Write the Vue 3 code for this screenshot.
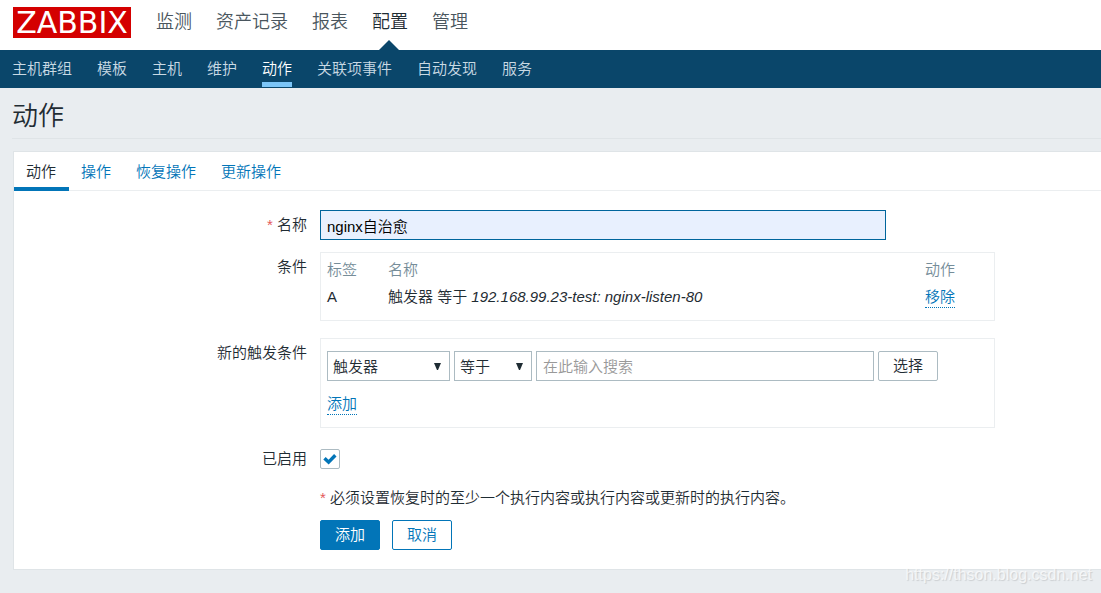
<script setup>
import { ref } from 'vue'

const mainMenu = ['监测', '资产记录', '报表', '配置', '管理']
const subMenu = ['主机群组', '模板', '主机', '维护', '动作', '关联项事件', '自动发现', '服务']
const tabs = ['动作', '操作', '恢复操作', '更新操作']

const name = ref('nginx自治愈')
const conditionType = ref('触发器')
const operator = ref('等于')
const search = ref('')
const enabled = ref(true)
</script>

<template>
  <div class="page">
    <header class="top">
      <a class="logo" href="#">ZABBIX</a>
      <nav class="main-menu">
        <a v-for="item in mainMenu" :key="item" href="#" :class="{ selected: item === '配置' }">{{ item }}</a>
      </nav>
    </header>
    <nav class="sub-menu">
      <a v-for="item in subMenu" :key="item" href="#" :class="{ selected: item === '动作' }">{{ item }}</a>
    </nav>

    <div class="title"><h1>动作</h1></div>

    <main class="panel">
      <nav class="tabs">
        <a v-for="tab in tabs" :key="tab" href="#" :class="{ selected: tab === '动作' }">{{ tab }}</a>
      </nav>

      <form class="form" @submit.prevent>
        <label class="caption" for="name"><span class="star">*</span> 名称</label>
        <input id="name" v-model="name" class="name-input" type="text">

        <div class="caption">条件</div>
        <div class="box conditions">
          <table>
            <thead>
              <tr><th class="col-label">标签</th><th>名称</th><th class="col-action">动作</th></tr>
            </thead>
            <tbody>
              <tr>
                <td>A</td>
                <td>触发器 等于 <em>192.168.99.23-test: nginx-listen-80</em></td>
                <td><button type="button" class="link">移除</button></td>
              </tr>
            </tbody>
          </table>
        </div>

        <div class="caption">新的触发条件</div>
        <div class="box new-condition">
          <div class="controls">
            <div class="select type">
              <select v-model="conditionType" aria-label="新的触发条件"><option>触发器</option></select>
              <svg width="7" height="7" viewBox="0 0 7 7"><path d="M0 0h7L4 7H3z" fill="#1f2c33" /></svg>
            </div>
            <div class="select operator">
              <select v-model="operator" aria-label="运算符"><option>等于</option></select>
              <svg width="7" height="7" viewBox="0 0 7 7"><path d="M0 0h7L4 7H3z" fill="#1f2c33" /></svg>
            </div>
            <input v-model="search" class="search" type="text" placeholder="在此输入搜索" aria-label="在此输入搜索">
            <button type="button" class="btn grey">选择</button>
          </div>
          <button type="button" class="link">添加</button>
        </div>

        <label class="caption" for="enabled">已启用</label>
        <div class="check">
          <input id="enabled" v-model="enabled" type="checkbox">
          <svg v-if="enabled" width="14" height="12" viewBox="0 0 14 12"><path d="M1.5 5.2 5.6 9.2 12.3 2.2" fill="none" stroke="#0275b8" stroke-width="3.4" /></svg>
        </div>

        <p class="note"><span class="star">*</span> 必须设置恢复时的至少一个执行内容或执行内容或更新时的执行内容。</p>

        <div class="buttons">
          <button type="submit" class="btn primary">添加</button>
          <button type="button" class="btn">取消</button>
        </div>
      </form>
    </main>

    <div class="watermark">https://thson.blog.csdn.net</div>
  </div>
</template>

<style>
body {
  margin: 0;
  background: #e9edf0;
}
</style>

<style scoped>
.page {
  position: relative;
  min-height: 100vh;
  overflow: hidden;
  background: #e9edf0;
  color: #1f2c33;
  font: 350 15px/20px "Liberation Sans", "Noto Sans CJK SC", sans-serif;
}

.page * {
  box-sizing: border-box;
}

a {
  text-decoration: none;
}

input,
select,
button {
  margin: 0;
  font: inherit;
  color: inherit;
}

.top {
  display: flex;
  align-items: center;
  height: 50px;
  padding: 0 13px 6px;
  background: #fff;
}

.logo {
  width: 118px;
  height: 31px;
  background: #d40000;
  color: #fff;
  font: 30px/31px "DejaVu Sans", sans-serif;
  text-align: center;
}

.main-menu {
  display: flex;
  gap: 24px;
  margin-left: 25px;
  font-size: 18px;
}

.main-menu a {
  position: relative;
  color: #4a565e;
}

.main-menu .selected {
  color: #1f2c33;
}

.main-menu .selected::after {
  content: "";
  position: absolute;
  left: 7px;
  top: 28px;
  border: 10px solid transparent;
  border-top-width: 0;
  border-bottom-color: #0a466a;
}

.sub-menu {
  display: flex;
  gap: 25px;
  height: 38px;
  padding: 0 12px;
  background: #0a466a;
}

.sub-menu a {
  height: 37px;
  color: #c9dae4;
  line-height: 37px;
}

.sub-menu .selected {
  border-bottom: 5px solid #7bc5f7;
  color: #fff;
}

.title {
  margin-left: 12px;
  border-bottom: 1px solid #dfe4e7;
}

h1 {
  margin: 0;
  padding: 13px 0 7px;
  font-size: 26px;
  font-weight: 350;
  line-height: 30px;
}

.panel {
  margin: 12px 0 24px 13px;
  border: 1px solid #dfe4e7;
  border-right: 0;
  background: #fff;
}

.tabs {
  display: flex;
  height: 39px;
  border-bottom: 1px solid #ebeef0;
}

.tabs a {
  height: 39px;
  padding: 0 12px;
  color: #0275b8;
  line-height: 39px;
}

.tabs a + a {
  padding-right: 13px;
}

.tabs .selected {
  width: 55px;
  border-bottom: 4px solid #0275b8;
  color: #1f2c33;
}

.form {
  display: grid;
  grid-template-columns: 293px minmax(0, 675px);
  column-gap: 13px;
  padding: 19px 12px 19px 0;
}

.caption {
  padding-top: 5px;
  text-align: right;
}

.star {
  color: #e45959;
}

.name-input,
.search,
select {
  height: 30px;
  padding: 0 6px;
  border: 1px solid #acbbc2;
  border-radius: 0;
  background: #fff;
  outline: 0;
}

.name-input {
  width: 100%;
  max-width: 566px;
  border-color: #00659c;
  background: #e8f0fe;
  color: #000;
}

.box {
  border: 1px solid #ebeef0;
}

.conditions {
  margin: 12px 0 17px;
  padding: 3px 6px 10px;
}

.name-input + .caption {
  padding-top: 17px;
}

table {
  width: 100%;
  table-layout: fixed;
  border-collapse: collapse;
}

th,
td {
  height: 27px;
  padding: 0;
  font-weight: inherit;
  text-align: left;
}

th {
  color: #768d99;
}

.col-label {
  width: 61px;
}

.col-action {
  width: 63px;
}

.link {
  display: block;
  height: 21px;
  padding: 0;
  border: 0;
  border-bottom: 1px dotted #0275b8;
  background: none;
  color: #0275b8;
}

td .link {
  height: 22px;
  padding-top: 1px;
}

.new-condition {
  padding: 12px 6px;
}

.controls {
  display: flex;
  gap: 4px;
  margin-bottom: 13px;
}

.select {
  position: relative;
}

.select select {
  width: 100%;
  padding: 1px 5px 0;
  appearance: none;
}

.select svg {
  position: absolute;
  top: 12px;
  right: 9px;
  pointer-events: none;
}

.type {
  width: 123px;
}

.operator {
  width: 78px;
}

.search {
  flex: 0 1 338px;
  min-width: 0;
}

.search::placeholder {
  color: #999;
  opacity: 1;
}

.btn {
  width: 60px;
  height: 30px;
  padding: 0;
  border: 1px solid #0275b8;
  border-radius: 2px;
  background: #fff;
  color: #0275b8;
}

.grey {
  border-color: #acbbc2;
  color: #1f2c33;
}

.primary {
  background: #0275b8;
  color: #fff;
}

label[for="enabled"] {
  padding-top: 21px;
}

.check {
  position: relative;
  height: 20px;
  margin-top: 21px;
}

.check input {
  display: block;
  width: 20px;
  height: 20px;
  border: 1px solid #acbbc2;
  border-radius: 2px;
  background: #fff;
  appearance: none;
}

.check svg {
  position: absolute;
  left: 3px;
  top: 4px;
  pointer-events: none;
}

.note,
.buttons {
  grid-column: 2;
}

.note {
  margin: 19px 0 12px;
}

.buttons {
  display: flex;
  gap: 12px;
}

.watermark {
  position: absolute;
  right: 9px;
  bottom: 9px;
  color: rgba(255, 255, 255, 0.7);
  font-size: 16px;
  text-shadow: 1px 1px 1px rgba(0, 0, 0, 0.13);
}
</style>
